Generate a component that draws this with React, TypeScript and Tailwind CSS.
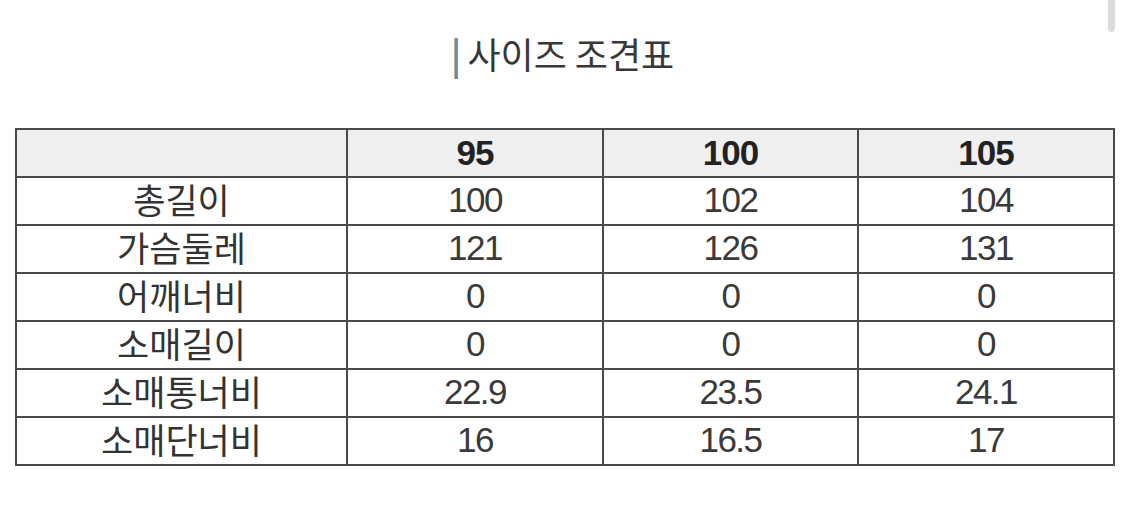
const sizes = ["95", "100", "105"];

const rows: { label: string; values: string[] }[] = [
  { label: "총길이", values: ["100", "102", "104"] },
  { label: "가슴둘레", values: ["121", "126", "131"] },
  { label: "어깨너비", values: ["0", "0", "0"] },
  { label: "소매길이", values: ["0", "0", "0"] },
  { label: "소매통너비", values: ["22.9", "23.5", "24.1"] },
  { label: "소매단너비", values: ["16", "16.5", "17"] },
];

const numFont = { fontFamily: '"Liberation Sans", Arial, sans-serif' };

export default function App() {
  return (
    <div
      className="relative w-[1125px] h-[506px] bg-white overflow-hidden text-[#333]"
      style={{ fontFamily: '"Noto Sans CJK KR", "Noto Sans", sans-serif' }}
    >
      {/* 스크롤바 */}
      <div className="absolute right-[10px] top-0 w-[7px] h-[32px] rounded-b bg-[#dcdcdc]" />

      <div className="pt-[29px] text-center text-[36px] leading-[48px] tracking-[0px] text-[#383838]">
        <span className="font-bold text-[#6f8c98] mr-[6px]">|</span>사이즈 조견표
      </div>

      <div className="pt-[51px] pl-[15px]">
        <table className="w-[1098px] table-fixed border-collapse border-2 border-[#4a4a4a]">
          <colgroup>
            <col className="w-[331px]" />
            <col className="w-[256px]" />
            <col className="w-[255px]" />
            <col className="w-[256px]" />
          </colgroup>
          <thead>
            <tr className="h-[48px] bg-[#efefef]">
              <th className="border-2 border-[#4a4a4a]" />
              {sizes.map((s) => (
                <th
                  key={s}
                  style={numFont}
                  className="border-2 border-[#4a4a4a] pb-[2px] text-[35px] font-bold leading-none tracking-[-1px] text-[#222]"
                >
                  {s}
                </th>
              ))}
            </tr>
          </thead>
          <tbody>
            {rows.map((row) => (
              <tr key={row.label} className="h-[48px]">
                <td className="border-2 border-[#4a4a4a] pb-[5px] text-center text-[35px] leading-none tracking-[0px] text-[#333]">
                  {row.label}
                </td>
                {row.values.map((v, i) => (
                  <td
                    key={i}
                    style={numFont}
                    className="border-2 border-[#4a4a4a] pb-[3px] text-center text-[35px] leading-none tracking-[-1.5px] text-[#3a3a3a]"
                  >
                    {v}
                  </td>
                ))}
              </tr>
            ))}
          </tbody>
        </table>
      </div>
    </div>
  );
}
